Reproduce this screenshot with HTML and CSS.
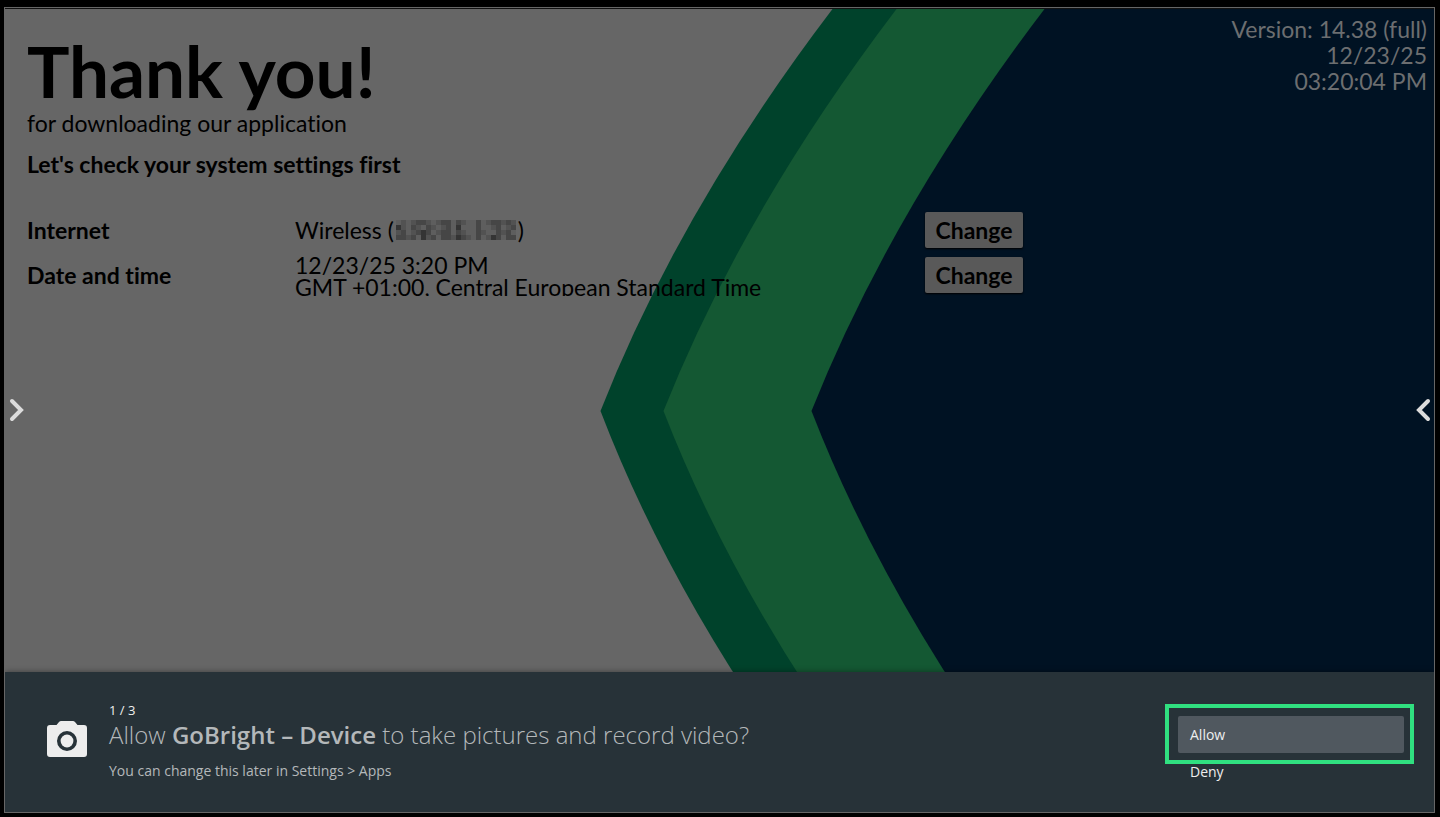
FILE: index.html
```
<!DOCTYPE html>
<html lang="en">
<head>
<meta charset="utf-8">
<title>GoBright - Device</title>
<link rel="stylesheet" href="styles.css">
</head>
<body>
<div class="screen">
  <main class="setup">
    <svg class="backdrop" viewBox="0 0 1430 804" preserveAspectRatio="xMidYMid slice" aria-hidden="true">
      <path fill="#00422b" d="M828 0Q675 201 596 402Q673 603 827 804H1430V0Z"/>
      <path fill="#145833" d="M892 0Q739 201 659 402Q737 603 891 804H1430V0Z"/>
      <path fill="#001223" d="M1040 0Q887 201 807 402Q885 603 1039 804H1430V0Z"/>
    </svg>
    <div class="intro">
      <h1 class="title">Thank you!</h1>
      <p class="subtitle">for downloading our application</p>
      <h2 class="lead">Let's check your system settings first</h2>
      <div class="settings">
        <span class="name">Internet</span>
        <span class="value">Wireless (<svg class="mask" width="120" height="20" viewBox="0 0 24 4" role="img" aria-label="Hidden address" shape-rendering="crispEdges">
          <path fill="#5e5e5e" d="M0 0h24v4h-24z"/>
          <path fill="#525252" d="M1 0h1v1h-1zM3 0h1v1h-1zM6 0h1v1h-1zM8 0h1v1h-1zM13 0h1v1h-1zM18 0h1v1h-1zM21 0h1v1h-1zM23 0h1v1h-1zM1 1h1v1h-1zM4 1h1v1h-1zM7 1h1v1h-1zM9 1h1v1h-1zM19 1h1v1h-1zM22 1h1v1h-1zM0 2h1v1h-1zM3 2h1v1h-1zM8 2h1v1h-1zM13 2h1v1h-1zM17 2h1v1h-1zM21 2h1v1h-1zM2 3h1v1h-1zM6 3h1v1h-1zM11 3h1v1h-1zM14 3h1v1h-1zM18 3h1v1h-1z"/>
          <path fill="#464646" d="M4 0h2v1h-2zM9 0h2v1h-2zM12 0h1v1h-1zM16 0h1v1h-1zM19 0h2v1h-2zM22 0h1v1h-1zM3 1h1v1h-1zM6 1h1v1h-1zM10 1h1v1h-1zM16 1h1v1h-1zM20 1h1v1h-1zM23 1h1v1h-1zM1 2h1v1h-1zM4 2h1v1h-1zM6 2h1v1h-1zM9 2h2v1h-2zM12 2h1v1h-1zM16 2h1v1h-1zM20 2h1v1h-1zM22 2h1v1h-1zM0 3h2v1h-2zM3 3h1v1h-1zM7 3h1v1h-1zM9 3h2v1h-2zM13 3h1v1h-1zM16 3h1v1h-1zM20 3h1v1h-1zM22 3h2v1h-2z"/>
          <path fill="#343434" d="M0 1h1v1h-1zM12 1h1v1h-1zM5 2h1v1h-1zM5 3h1v1h-1zM12 3h1v1h-1zM19 3h1v1h-1z"/>
        </svg>)</span>
        <button class="change" type="button">Change</button>
        <span class="name">Date and time</span>
        <span class="value value-lines">12/23/25 3:20 PM<br>GMT +01:00, Central European Standard Time</span>
        <button class="change" type="button">Change</button>
      </div>
    </div>
    <div class="status">
      <span>Version: 14.38 (full)</span>
      <span>12/23/25</span>
      <span>03:20:04 PM</span>
    </div>
  </main>
  <button class="drawer drawer-left" type="button" aria-label="Open left panel">
    <svg width="16" height="24" viewBox="0 0 16 24"><path d="M3 3L12 12L3 21"/></svg>
  </button>
  <button class="drawer drawer-right" type="button" aria-label="Open right panel">
    <svg width="16" height="24" viewBox="0 0 16 24"><path d="M13 3L4 12L13 21"/></svg>
  </button>
  <section class="permission">
    <svg class="camera" width="40" height="36" viewBox="0 0 40 36" aria-hidden="true">
      <path fill="#ededed" fill-rule="evenodd" d="M14 0H26Q27 0 28 1L30.500 4H37Q40 4 40 7V33Q40 36 37 36H3Q0 36 0 33V7Q0 4 3 4H9.500L12 1Q13 0 14 0ZM20 10A10 10 0 1 0 20 30A10 10 0 1 0 20 10Z"/>
      <circle cx="20" cy="20" r="6.400" fill="#ededed"/>
    </svg>
    <div class="message">
      <span class="step">1 / 3</span>
      <p class="question">Allow <b>GoBright – Device</b> to take pictures and record video?</p>
      <p class="hint">You can change this later in Settings &gt; Apps</p>
    </div>
    <div class="actions">
      <button class="action action-focused" type="button">Allow</button>
      <button class="action" type="button">Deny</button>
    </div>
  </section>
</div>
</body>
</html>
```
FILE: styles.css
```
*, *::before { box-sizing: border-box; }

body {
  margin: 0;
  height: 100vh;
  padding: 7px 5px 4px 4px;
  background: #000;
  font-family: Lato, sans-serif;
  font-variant-ligatures: none;
}

h1, h2, p { margin: 0; }

button {
  border: 0;
  padding: 0;
  font-family: inherit;
}

.screen {
  position: relative;
  display: flex;
  flex-direction: column;
  height: 100%;
  border: 1px solid #666;
  background: #666;
  overflow: hidden;
}

.backdrop {
  position: absolute;
  inset: 1px 0 0;
  width: 100%;
  height: 100%;
}

.setup {
  flex: 1;
  display: flex;
  justify-content: space-between;
  border-top: 1px solid #111;
  font-size: 23px;
  line-height: 26px;
  color: #000;
}

.intro {
  position: relative;
  padding: 26px 22px;
}

.title {
  font-size: 71px;
  line-height: 72px;
}

.subtitle { padding-top: 3px; }

.lead {
  padding-top: 15px;
  font-size: 23px;
}

.settings {
  display: grid;
  grid-template-columns: 268px 630px auto;
  grid-auto-rows: 36px;
  row-gap: 9px;
  align-items: center;
  padding-top: 35px;
}

.name { font-weight: 700; }

.value {
  display: flex;
  align-items: center;
}

.mask { margin: 0 2px; }

.value-lines {
  display: block;
  height: 42px;
  line-height: 22px;
  overflow: hidden;
}

.change {
  width: 98px;
  height: 36px;
  border-radius: 2px;
  background: #595959;
  box-shadow: 0 1px 2px #000;
  font-size: 23px;
  font-weight: 700;
  color: #000;
}

.status {
  position: relative;
  display: flex;
  flex-direction: column;
  align-items: flex-end;
  padding: 7px;
  color: #6c6e70;
}

.drawer {
  position: absolute;
  top: 390px;
  height: 24px;
  background: none;
}

.drawer-left { left: 4px; }
.drawer-right { right: 3px; }

.drawer path {
  fill: none;
  stroke: #dcdcdc;
  stroke-width: 4;
  stroke-linecap: round;
}

.drawer svg { display: block; }

.permission {
  position: relative;
  display: flex;
  align-items: flex-start;
  height: 140px;
  padding: 29px 20px 0 42px;
  background: #273238;
  box-shadow: 0 0 6px rgba(0, 0, 0, 0.4);
  font-family: "Open Sans", "Noto Sans", sans-serif;
  color: #b4b8ba;
}

.camera { margin-top: 20px; }

.message {
  flex: 1;
  padding-left: 22px;
}

.step {
  display: block;
  font-size: 13px;
  line-height: 18px;
  color: #eee;
}

.question {
  font-size: 24px;
  font-weight: 300;
  line-height: 32px;
}

.question b { font-weight: 600; }

.hint {
  padding-top: 10px;
  font-size: 14px;
  line-height: 20px;
}

.actions {
  position: relative;
  display: flex;
  flex-direction: column;
  width: 249px;
  padding: 15px 10px 0 13px;
}

.actions::before {
  content: "";
  position: absolute;
  inset: 3px 0 auto;
  height: 60px;
  border: 4px solid #30e080;
  pointer-events: none;
}

.action {
  height: 37px;
  padding-left: 12px;
  background: none;
  font-size: 14px;
  text-align: left;
  color: #eee;
}

.action-focused {
  border-radius: 2px;
  background: #50585f;
}
```
